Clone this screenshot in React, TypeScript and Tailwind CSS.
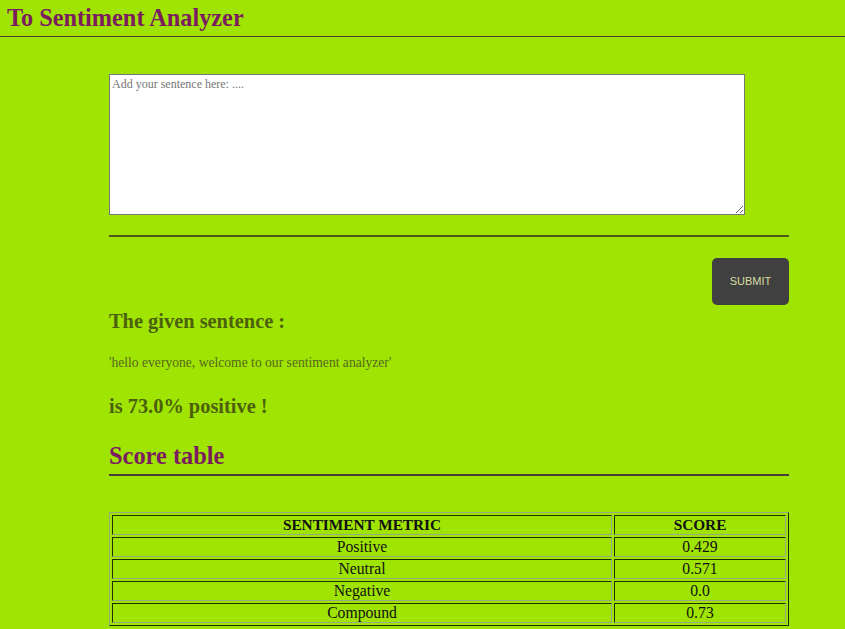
import React from "react";

const rows = [
  ["Positive", "0.429"],
  ["Neutral", "0.571"],
  ["Negative", "0.0"],
  ["Compound", "0.73"],
];

const cell =
  "h-[20px] border border-t-[#1e3005] border-l-[#1e3005] border-b-[#9aa88a] border-r-[#9aa88a] p-0 text-center leading-[18px]";

export default function App() {
  return (
    <div className="min-h-[629px] bg-[#a0e404] font-['Liberation_Serif',serif]">
      <div className="h-[37px] border-b-[1.5px] border-[#4b3b3b] px-[7px] pt-[4px]">
        <h1 className="text-[24.3px] font-bold leading-[28px] text-[#7b1c5e]">To Sentiment Analyzer</h1>
      </div>
      <div className="ml-[109px] w-[680px]">
        <textarea
          className="mt-[37px] block h-[141px] w-[636px] border border-[#767676] bg-white p-[2px] text-[12px] leading-[14px] text-black placeholder:text-[#757575] font-['Liberation_Serif',serif]"
          placeholder="Add your sentence here: ...."
        />
        <div className="mt-[20px] h-[2px] bg-[#4a5a1a]" />
        <div className="mt-[21px] flex justify-end">
          <button className="h-[47px] w-[77px] rounded-[5px] bg-[#404040] font-['Liberation_Sans',sans-serif] text-[11px] text-[#d6dca0]">
            SUBMIT
          </button>
        </div>
        <h3 className="mt-[5px] text-[20.4px] font-bold leading-[22px] text-[#4c610c]">The given sentence :</h3>
        <p className="mt-[23px] text-[13.6px] leading-[15px] text-[#56681c]">'hello everyone, welcome to our sentiment analyzer'</p>
        <h3 className="mt-[25px] text-[20.4px] font-bold leading-[22px] text-[#4c610c]">is 73.0% positive !</h3>
        <h2 className="mt-[25px] text-[24.4px] font-bold leading-[28px] text-[#7b1c5e]">Score table</h2>
        <div className="mt-[4px] h-[1.5px] bg-[#4b3b3b]" />
        <table className="mt-[36px] w-full border-separate border-spacing-[2px] border border-t-[#9aa88a] border-l-[#9aa88a] border-b-[#1e3005] border-r-[#1e3005] text-[15.7px] text-[#111]">
          <thead>
            <tr>
              <th className={cell + " w-[500px] text-[15.3px] font-bold"}>SENTIMENT METRIC</th>
              <th className={cell + " text-[15.3px] font-bold"}>SCORE</th>
            </tr>
          </thead>
          <tbody>
            {rows.map(([a, b]) => (
              <tr key={a}>
                <td className={cell}>{a}</td>
                <td className={cell}>{b}</td>
              </tr>
            ))}
          </tbody>
        </table>
      </div>
    </div>
  );
}
